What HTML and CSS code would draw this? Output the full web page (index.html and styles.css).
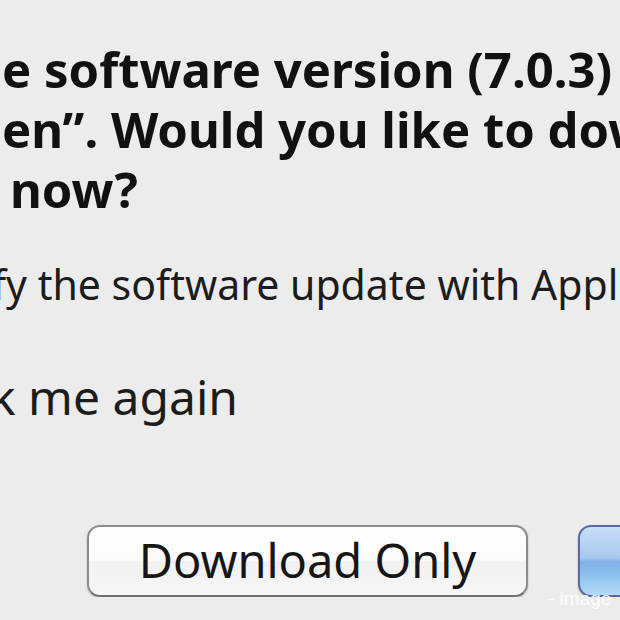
FILE: index.html
```html
<!DOCTYPE html>
<html>
<head>
<meta charset="utf-8">
<link rel="stylesheet" href="styles.css">
</head>
<body>
<div class="dialog">
  <div class="message">
    <div class="line">e software version (7.0.3)</div>
    <div class="line">en”. Would you like to download and install</div>
    <div class="line indent">now?</div>
  </div>
  <div class="info"><span class="shift-info">fy the software update with Apple.</span></div>
  <div class="check"><span class="shift-check">k me again</span></div>
  <div class="buttons">
    <div class="btn">Download Only</div>
    <div class="btn default"></div>
  </div>
</div>
<div class="watermark">- image</div>
</body>
</html>
```

FILE: styles.css
```css
html, body {
  margin: 0;
  padding: 0;
  width: 620px;
  height: 620px;
  overflow: hidden;
  background: #ececec;
}

body {
  position: relative;
  color: #141414;
  font-family: "Noto Sans", "Open Sans", "DejaVu Sans", sans-serif;
}

.dialog {
  display: flex;
  flex-direction: column;
  white-space: nowrap;
  overflow: hidden;
}

.message {
  margin-top: 39px;
  padding-left: 2px;
  font-size: 49px;
  font-weight: 700;
  line-height: 60px;
  color: #111111;
}

.message .indent {
  padding-left: 8px;
}

.info {
  margin-top: 40px;
  font-size: 41px;
  line-height: 50px;
  color: #1c1c1c;
}

.shift-info {
  display: inline-block;
  margin-left: -8px;
}

.check {
  margin-top: 60px;
  font-size: 48px;
  line-height: 56px;
  color: #1c1c1c;
}

.shift-check {
  display: inline-block;
  margin-left: -10px;
}

.buttons {
  display: flex;
  gap: 50px;
  margin-top: 100px;
  padding-left: 87px;
}

.btn {
  flex: none;
  box-sizing: border-box;
  width: 441px;
  height: 72px;
  border: 2px solid #8c8c8c;
  border-bottom-color: #6f6f6f;
  border-radius: 13px;
  background: linear-gradient(#ffffff 0%, #fbfbfb 50%, #f1f1f1 51%, #f7f7f7 100%);
  box-shadow: 0 1px 2px rgba(0,0,0,0.25);
  font-size: 47px;
  line-height: 66px;
  text-align: center;
  color: #161616;
}

.btn.default {
  width: 120px;
  border-color: #5b67a6;
  background: linear-gradient(#c9def6 0%, #a7c9ef 45%, #7fb2e7 52%, #8cc0ee 70%, #b4daf7 100%);
}

.watermark {
  position: absolute;
  left: 548px;
  top: 588px;
  font-family: "Liberation Sans", sans-serif;
  font-size: 19px;
  color: rgba(255,255,255,0.9);
}
```
